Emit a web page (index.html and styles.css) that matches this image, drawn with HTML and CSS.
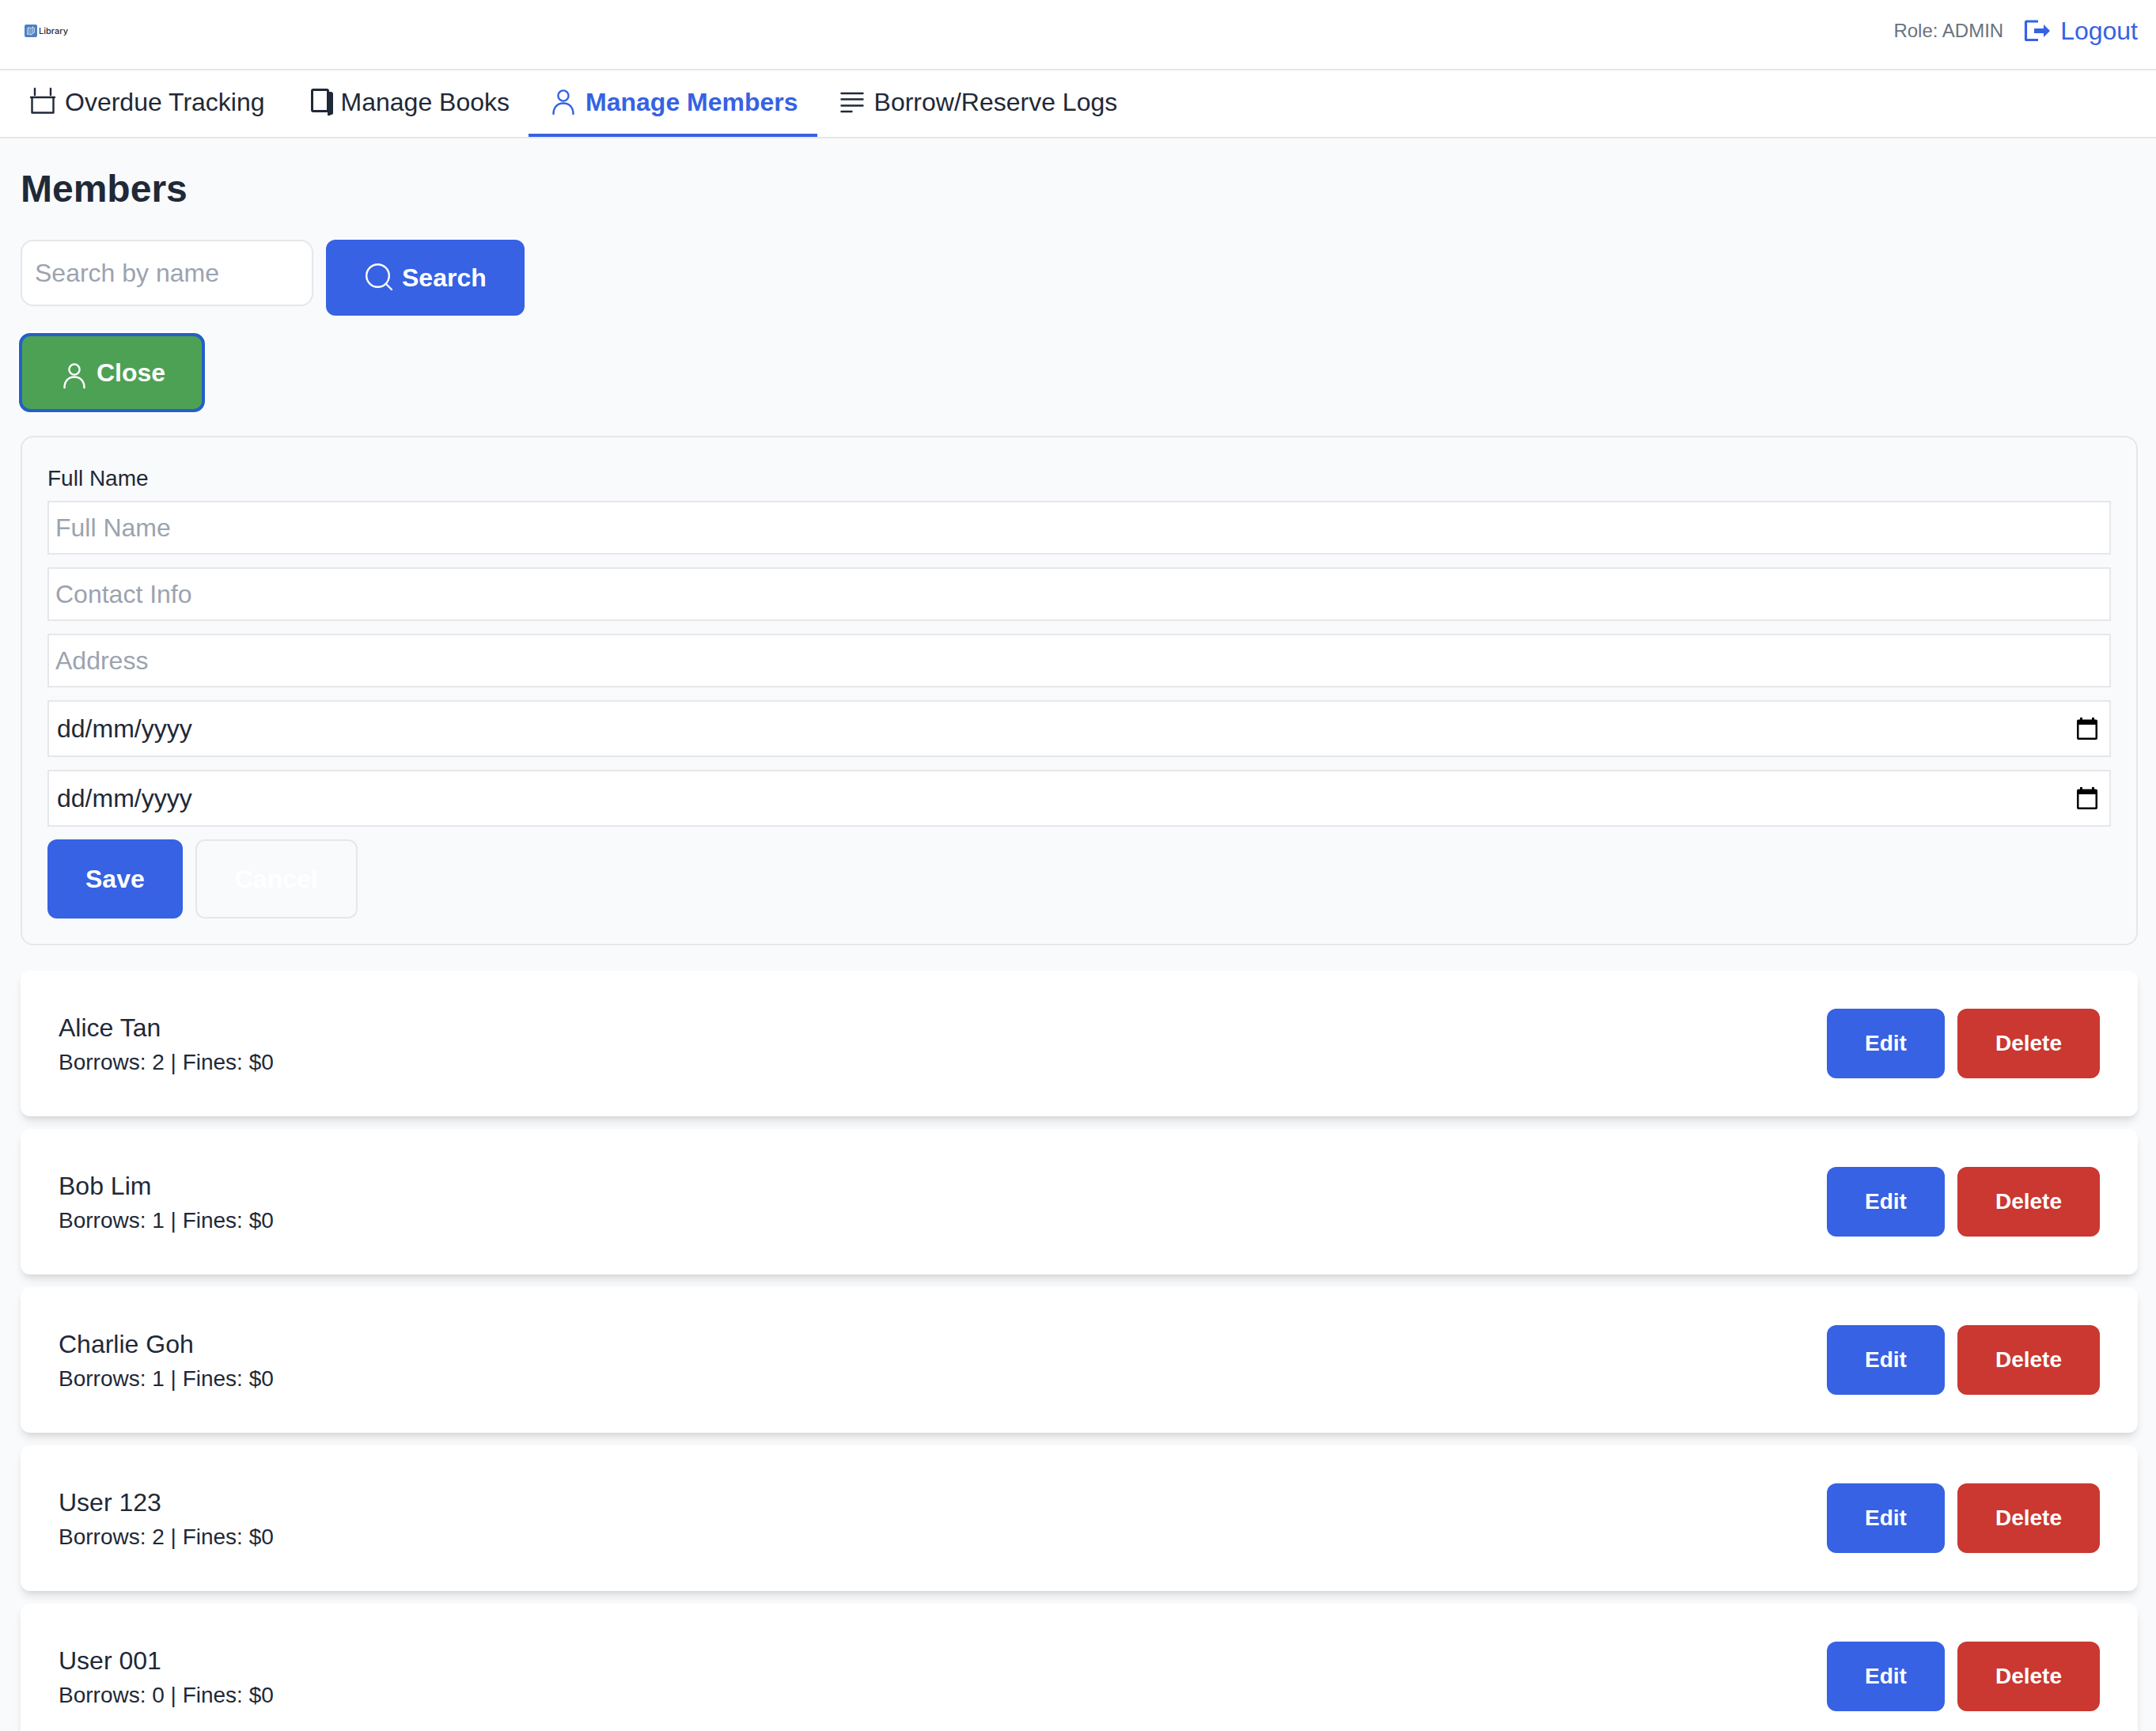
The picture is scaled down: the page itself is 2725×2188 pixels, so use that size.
FILE: index.html
```html
<!DOCTYPE html>
<html lang="en-GB">
<head>
<meta charset="utf-8">
<title>Library - Members</title>
<meta name="viewport" content="width=device-width, initial-scale=1">
<link rel="stylesheet" href="styles.css">
</head>
<body>
<svg class="sprite" aria-hidden="true">
  <symbol id="calendar" viewBox="0 0 40 40"><path d="M10 3v8M30 3v8M5 14h30M6.500 14v19.500h27V14" fill="none" stroke="currentColor" stroke-width="2.400" stroke-linecap="round" stroke-linejoin="round"/></symbol>
  <symbol id="book" viewBox="0 0 40 40"><rect x="11.500" y="4.500" width="20" height="27" rx="1.500" fill="none" stroke="currentColor" stroke-width="3"/><path d="M31 7h4a3 3 0 0 1 3 3v24a2 2 0 0 1-2 2h-1l-1 1h-2.500q-.5 0-.5-1z" fill="currentColor"/></symbol>
  <symbol id="person" viewBox="0 0 40 40"><g fill="none" stroke="currentColor" stroke-width="2.400" stroke-linecap="round"><circle cx="20" cy="12" r="6.600"/><path d="M7.500 35c0-8.500 5-13.500 12.500-13.500s12.500 5 12.500 13.500"/></g></symbol>
  <symbol id="lines" viewBox="0 0 40 40"><path d="M6.500 9h27M6.500 16.500h27M6.500 24.500h27M6.500 32h13" fill="none" stroke="currentColor" stroke-width="2.400" stroke-linecap="round"/></symbol>
  <symbol id="search" viewBox="0 0 40 40"><g fill="none" stroke="currentColor" stroke-width="2.400" stroke-linecap="round"><circle cx="17.500" cy="17.500" r="14.300"/><path d="M28 28l7 7"/></g></symbol>
  <symbol id="logout" viewBox="0 0 40 40"><path d="M20 8H5.500q-1 0-1 1v21.500q0 1 1 1H20" fill="none" stroke="currentColor" stroke-width="3.200"/><path d="M15 17h12v-5l8 8-8 8v-5H15z" fill="currentColor"/></symbol>
  <symbol id="date" viewBox="0 0 26 28"><path d="M4 0h3v2.500h12V0h3v2.500h2q2 0 2 2V26q0 2-2 2H2q-2 0-2-2V4.500q0-2 2-2h2zM2.500 9v16.500h21V9z" fill="currentColor" fill-rule="evenodd"/></symbol>
</svg>

<header class="topbar">
  <a class="logo" href="#">
    <svg class="logo-mark" viewBox="0 0 16 16" aria-hidden="true"><rect width="16" height="16" rx="2" fill="#4c80c4"/><g fill="none" stroke="#fff" stroke-width=".7"><path d="M3.500 5l2-1.500v8.500l-2 .5zM5.500 3.500L8 5v8l-2.500-1M8 5l2.500-2 2 1.500V10L8 13M10.500 3v8"/></g></svg>
    <span>Library</span>
  </a>
  <div class="account">
    <span class="role">Role: ADMIN</span>
    <button class="logout" type="button"><svg class="icon"><use href="#logout"/></svg>Logout</button>
  </div>
</header>

<nav class="tabs">
  <a class="tab" href="#"><svg class="icon"><use href="#calendar"/></svg>Overdue Tracking</a>
  <a class="tab" href="#"><svg class="icon"><use href="#book"/></svg>Manage Books</a>
  <a class="tab tab-active" href="#" aria-current="page"><svg class="icon"><use href="#person"/></svg>Manage Members</a>
  <a class="tab" href="#"><svg class="icon"><use href="#lines"/></svg>Borrow/Reserve Logs</a>
</nav>

<main class="content">
  <h1 class="title">Members</h1>

  <form class="search">
    <input class="search-input" type="text" placeholder="Search by name" aria-label="Search by name">
    <button class="btn btn-blue" type="button"><svg class="icon"><use href="#search"/></svg>Search</button>
  </form>

  <button class="btn btn-green btn-focused" type="button"><svg class="icon icon-low"><use href="#person"/></svg>Close</button>

  <form class="member-form">
    <div class="field">
      <label class="label" for="full-name">Full Name</label>
      <input class="input" id="full-name" type="text" placeholder="Full Name">
    </div>
    <input class="input" type="text" placeholder="Contact Info" aria-label="Contact Info">
    <input class="input" type="text" placeholder="Address" aria-label="Address">
    <div class="input date">
      <input class="date-input" type="text" inputmode="numeric" placeholder="dd/mm/yyyy" aria-label="Start date">
      <button class="date-button" type="button" aria-label="Pick start date"><svg class="date-icon"><use href="#date"/></svg></button>
    </div>
    <div class="input date">
      <input class="date-input" type="text" inputmode="numeric" placeholder="dd/mm/yyyy" aria-label="End date">
      <button class="date-button" type="button" aria-label="Pick end date"><svg class="date-icon"><use href="#date"/></svg></button>
    </div>
    <div class="actions">
      <button class="btn btn-blue" type="button">Save</button>
      <button class="btn btn-outline" type="button">Cancel</button>
    </div>
  </form>

  <ul class="members">
    <li class="member">
      <div><p class="name">Alice Tan</p><p class="stats">Borrows: 2 | Fines: $0</p></div>
      <div class="actions"><button class="btn btn-small btn-blue" type="button">Edit</button><button class="btn btn-small btn-red" type="button">Delete</button></div>
    </li>
    <li class="member">
      <div><p class="name">Bob Lim</p><p class="stats">Borrows: 1 | Fines: $0</p></div>
      <div class="actions"><button class="btn btn-small btn-blue" type="button">Edit</button><button class="btn btn-small btn-red" type="button">Delete</button></div>
    </li>
    <li class="member">
      <div><p class="name">Charlie Goh</p><p class="stats">Borrows: 1 | Fines: $0</p></div>
      <div class="actions"><button class="btn btn-small btn-blue" type="button">Edit</button><button class="btn btn-small btn-red" type="button">Delete</button></div>
    </li>
    <li class="member">
      <div><p class="name">User 123</p><p class="stats">Borrows: 2 | Fines: $0</p></div>
      <div class="actions"><button class="btn btn-small btn-blue" type="button">Edit</button><button class="btn btn-small btn-red" type="button">Delete</button></div>
    </li>
    <li class="member">
      <div><p class="name">User 001</p><p class="stats">Borrows: 0 | Fines: $0</p></div>
      <div class="actions"><button class="btn btn-small btn-blue" type="button">Edit</button><button class="btn btn-small btn-red" type="button">Delete</button></div>
    </li>
  </ul>
</main>
</body>
</html>
```
FILE: styles.css
```css
*,
*::before,
*::after {
  box-sizing: border-box;
}

body {
  margin: 0;
  background: #f9fafc;
  color: #1f2937;
  font: 32px/48px "Liberation Sans", Arial, sans-serif;
}

h1,
p,
ul {
  margin: 0;
  padding: 0;
}

a {
  color: inherit;
  text-decoration: none;
}

button,
input {
  margin: 0;
  padding: 0;
  border: 0;
  background: none;
  color: inherit;
  font: inherit;
}

button {
  cursor: pointer;
}

input::placeholder {
  color: #9ca3af;
  opacity: 1;
}

.sprite {
  display: none;
}

.icon {
  flex: none;
  width: 40px;
  height: 40px;
}

/* Header */
.topbar {
  display: flex;
  align-items: center;
  justify-content: space-between;
  padding: 15px 23px 24px 31px;
  border-bottom: 2px solid #e5e7eb;
  background: #fff;
}

.logo {
  display: flex;
  align-items: center;
  gap: 2px;
  font: 500 11px/16px Inter, sans-serif;
}

.logo-mark {
  width: 16px;
  height: 16px;
}

.account {
  display: flex;
  align-items: center;
  gap: 24px;
}

.role {
  color: #6b7280;
  font-size: 24px;
}

.logout {
  display: flex;
  align-items: center;
  gap: 8px;
  color: #3662e3;
}

/* Tabs */
.tabs {
  display: flex;
  padding: 0 10px;
  border-bottom: 2px solid #e5e7eb;
  background: #fff;
}

.tab {
  display: flex;
  align-items: center;
  gap: 8px;
  padding: 16px 24px;
  border-bottom: 4px solid transparent;
}

.tab-active {
  border-color: #3662e3;
  color: #3662e3;
  font-weight: 700;
}

/* Page */
.content {
  padding: 32px 23px 32px 26px;
}

.title {
  margin-bottom: 32px;
  font-size: 48px;
  line-height: 64px;
}

.search {
  display: flex;
  align-items: flex-start;
  gap: 16px;
  margin-bottom: 24px;
}

.search-input {
  width: 370px;
  padding: 16px;
  border: 2px solid #e5e7eb;
  border-radius: 16px;
  background: #fff;
}

/* Buttons */
.btn {
  display: flex;
  align-items: center;
  justify-content: center;
  gap: 8px;
  padding: 24px 48px;
  border-radius: 12px;
  color: #fff;
  font-weight: 700;
}

.btn-small {
  font-size: 28px;
  line-height: 40px;
}

.btn-blue {
  background: #3662e3;
}

.btn-green {
  background: #4da154;
}

.btn-red {
  background: #ca3831;
}

.btn-outline {
  border: 2px solid #e5e7eb;
}

.btn-focused {
  outline: 4px solid #245fc9;
  outline-offset: -2px;
  box-shadow: 0 0 0 4px #fff;
}

.icon-low {
  margin-top: 6px;
  margin-bottom: -2px;
}

/* Member form */
.member-form {
  display: flex;
  flex-direction: column;
  gap: 16px;
  margin: 32px 0;
  padding: 32px;
  border: 2px solid #e5e7eb;
  border-radius: 16px;
}

.field {
  display: flex;
  flex-direction: column;
  gap: 8px;
}

.label {
  font-size: 28px;
  line-height: 40px;
}

.input {
  width: 100%;
  padding: 8px;
  border: 2px solid #e5e7eb;
  background: #fff;
}

.date {
  display: flex;
  align-items: center;
  padding: 10px 15px 10px 10px;
}

.date-input {
  flex: 1;
}

.date-input::placeholder {
  color: #1f2937;
}

.date-button {
  display: flex;
  color: #000;
}

.date-icon {
  width: 26px;
  height: 28px;
}

.actions {
  display: flex;
  gap: 16px;
}

/* Member list */
.members {
  display: flex;
  flex-direction: column;
  gap: 16px;
  list-style: none;
}

.member {
  display: flex;
  align-items: center;
  justify-content: space-between;
  padding: 48px;
  border-radius: 12px;
  background: #fff;
  box-shadow: 0 8px 12px -2px rgb(0 0 0 / 10%), 0 4px 8px -4px rgb(0 0 0 / 10%);
}

.stats {
  font-size: 28px;
  line-height: 40px;
}
```
